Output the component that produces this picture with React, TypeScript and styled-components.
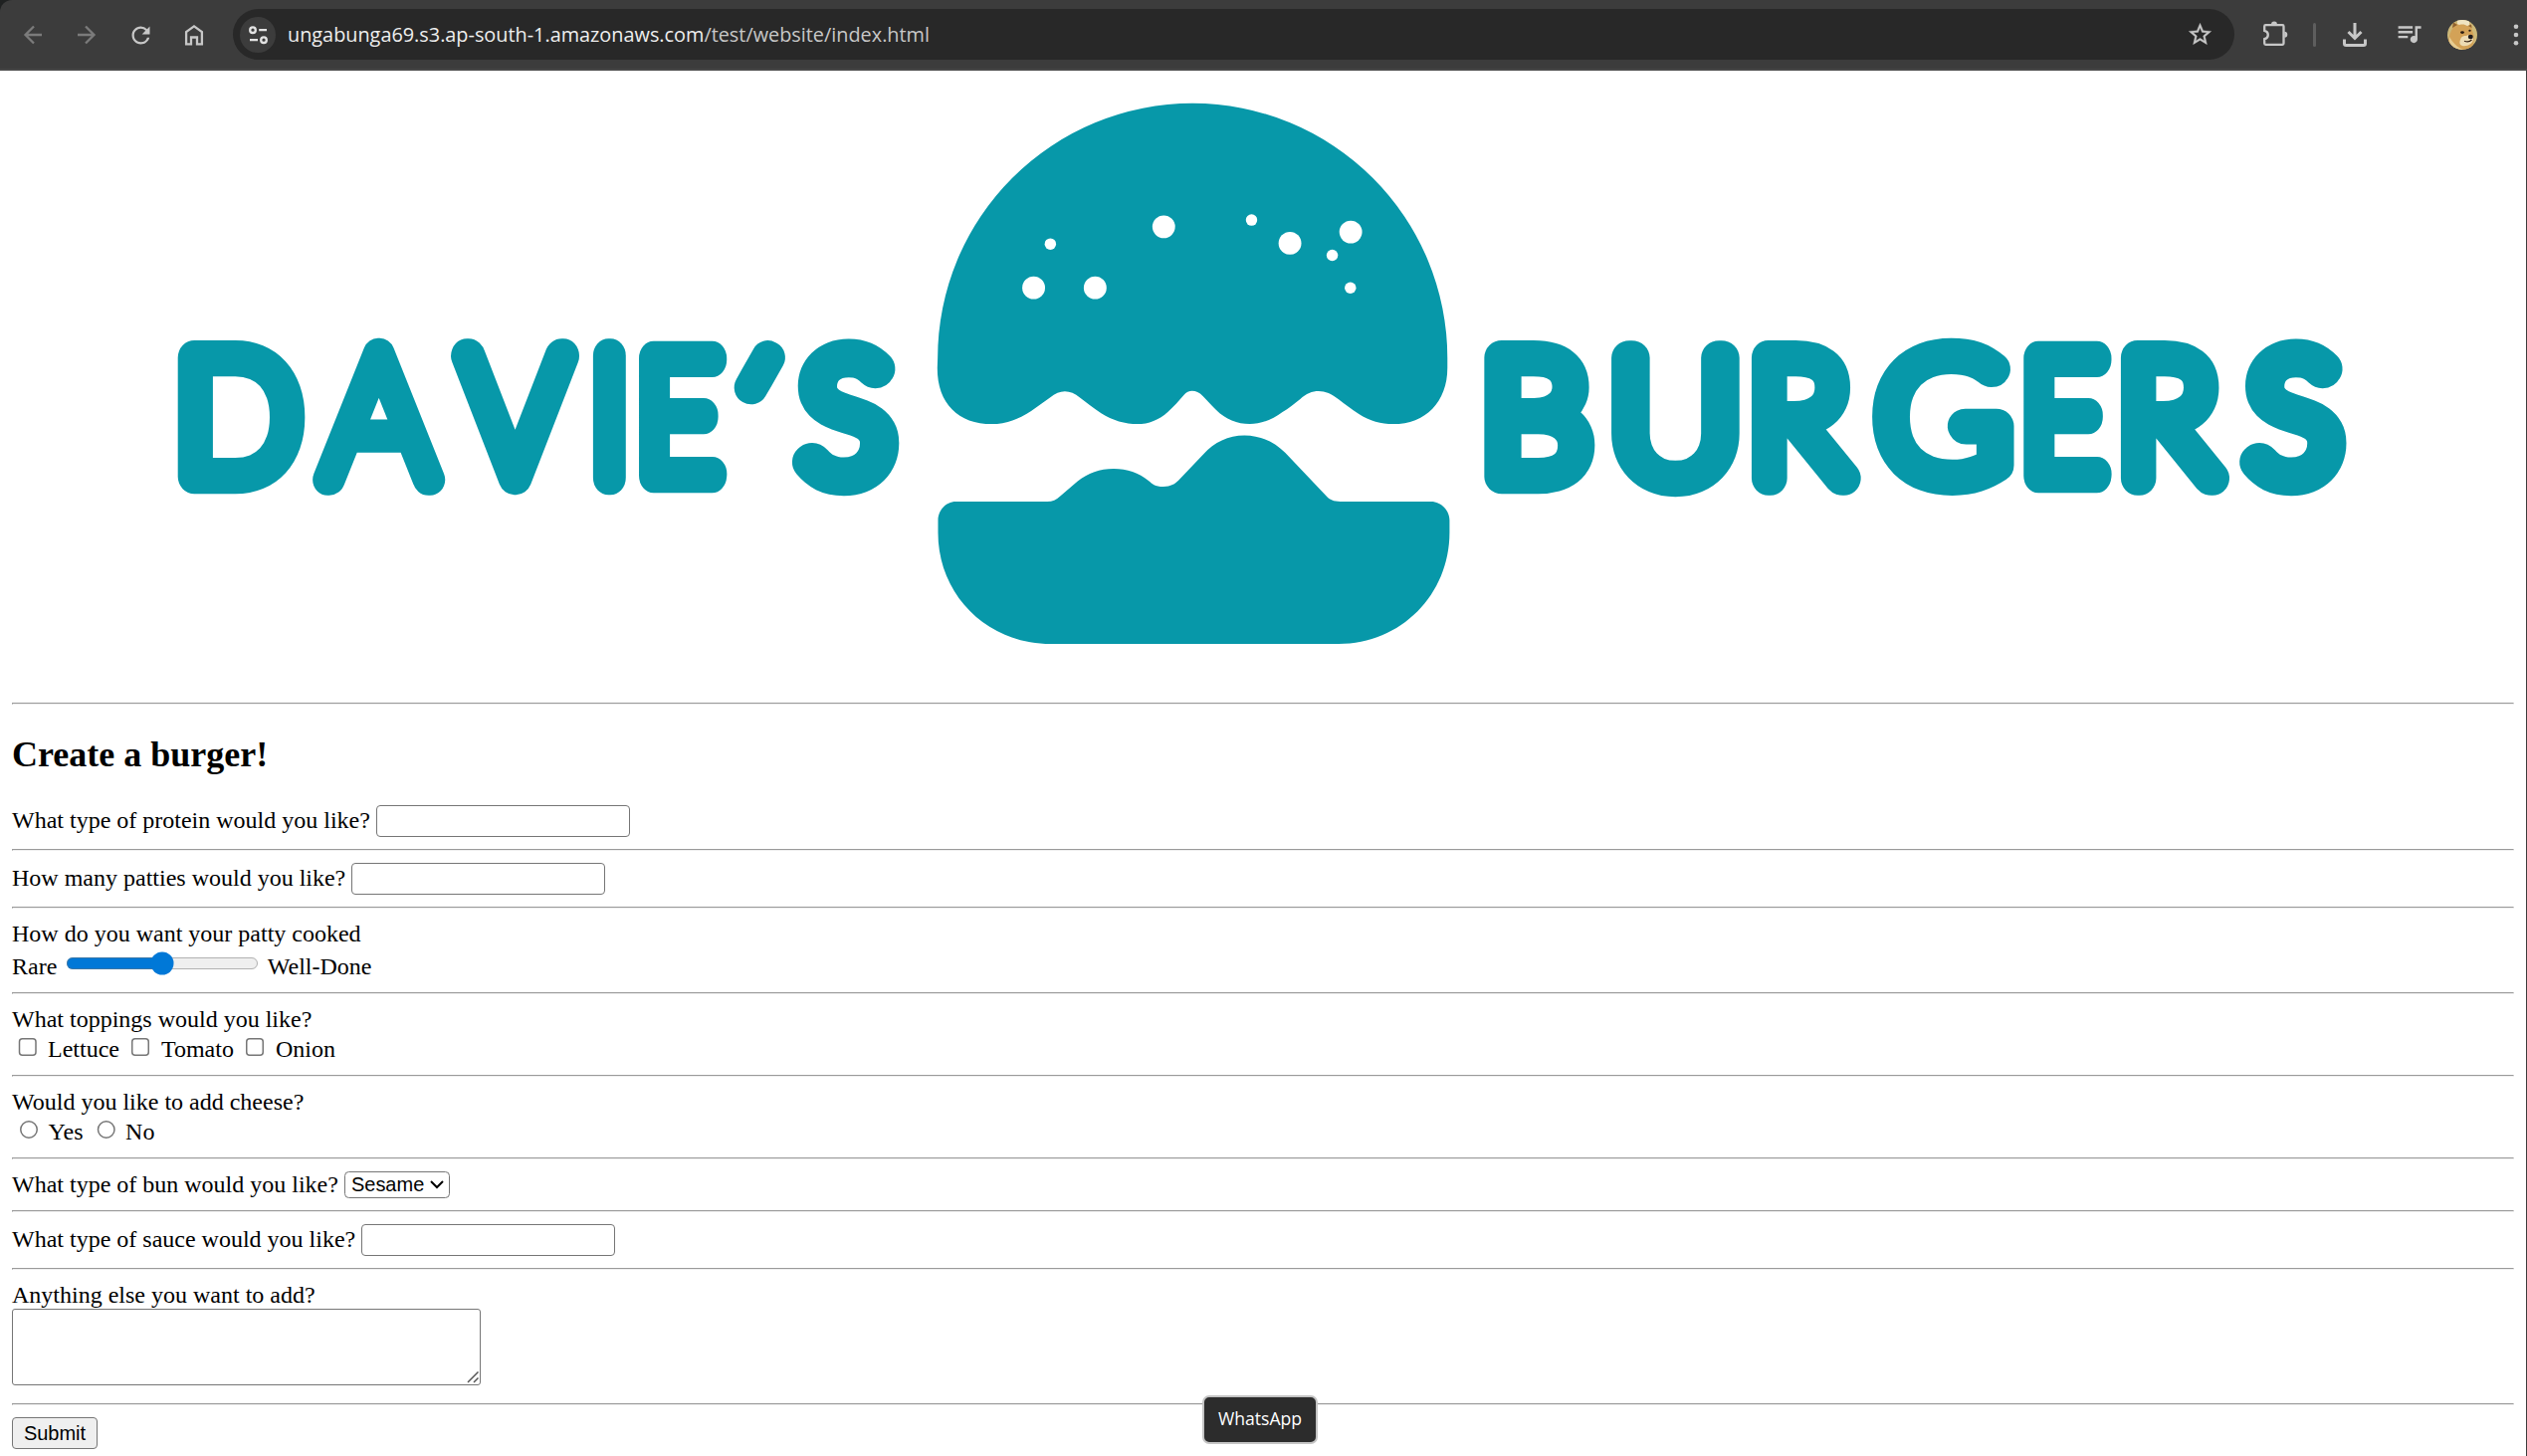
import React, { useMemo } from "react";
import styled, { createGlobalStyle } from "styled-components";
import { MdQueueMusic, MdRefresh, MdStarOutline } from "react-icons/md";

const TEAL = "#0798a9";
const SERIF = '"Liberation Serif", "Times New Roman", serif';
const SANS = '"Liberation Sans", Arial, sans-serif';
const UI = '"Open Sans", "Noto Sans", sans-serif';

const GlobalStyle = createGlobalStyle`
  html, body { margin: 0; padding: 0; background: #fff; overflow: hidden; }
  *, *::before, *::after { box-sizing: border-box; }
`;

/* ---------- browser chrome ---------- */

const Window = styled.div`
  display: flex;
  flex-direction: column;
  width: 100%;
  height: 1463px;
  overflow: hidden;
  background: #1f2121;
`;

const Toolbar = styled.header`
  display: flex;
  align-items: flex-start;
  flex: none;
  height: 71px;
  padding: 9px 0 0 6px;
  overflow: hidden;
  background: #3c3c3c;
  border-bottom: 2px solid #474747;
  border-top-left-radius: 12px;
`;

const ToolButton = styled.button<{ $dim?: boolean }>`
  display: flex;
  align-items: center;
  justify-content: center;
  flex: none;
  width: 54px;
  height: 52px;
  padding: 0;
  border: 0;
  background: none;
  color: ${(p) => (p.$dim ? "#7b7b7b" : "#c7c7c7")};
`;

const Glyph = styled.svg<{ $weight?: number }>`
  display: block;
  width: 30px;
  height: 30px;
  fill: none;
  stroke: currentColor;
  stroke-width: ${(p) => p.$weight ?? 2.3};
`;

const Omnibox = styled.div`
  display: flex;
  align-items: center;
  flex: 1;
  height: 51px;
  margin: 0 14px 0 12px;
  padding: 0 21px 0 7px;
  border-radius: 26px;
  background: #282828;
`;

const SiteChip = styled.span`
  display: flex;
  align-items: center;
  justify-content: center;
  flex: none;
  width: 36px;
  height: 36px;
  margin-right: 12px;
  border-radius: 50%;
  background: #3c3c3c;
  color: #e3e3e3;
`;

const Url = styled.span`
  flex: 1;
  font: 19.85px/28px ${UI};
  color: #c7c7c7;
  white-space: nowrap;
`;

const Domain = styled.span`
  color: #eeeeee;
`;

const StarIcon = styled(MdStarOutline)`
  flex: none;
  width: 27px;
  height: 27px;
  color: #c7c7c7;
  stroke: currentColor;
  stroke-width: 0.3;
`;

const ReloadIcon = styled(MdRefresh)`
  width: 27px;
  height: 27px;
`;

const QueueIcon = styled(MdQueueMusic)`
  width: 29px;
  height: 29px;
  margin-bottom: 3px;
`;

const Divider = styled.span`
  flex: none;
  width: 3px;
  height: 24px;
  margin: 14px 12px 0 11px;
  border-radius: 2px;
  background: #5e5e5e;
`;

const Actions = styled.div`
  display: flex;
  flex: none;
  width: 280px;
  overflow: hidden;
`;

/* ---------- page ---------- */

const Page = styled.main`
  flex: 1;
  padding: 12px 12px 0;
  background: #fff;
  border-right: 1px solid #3c3c3c;
  color: #000;
  font-family: ${SERIF};
  font-size: 24px;
`;

const Logo = styled.svg`
  display: block;
  width: 2514px;
  height: 611px;
  fill: ${TEAL};
`;

const Wordmark = styled.text`
  font-family: Lato, sans-serif;
  font-weight: 100;
  stroke: ${TEAL};
  stroke-linejoin: round;
  stroke-linecap: round;
`;

const Rule = styled.hr`
  height: 2px;
  margin: 12px 0;
  border: 1px solid;
  border-color: #9a9a9a #eeeeee #eeeeee #9a9a9a;
`;

const Heading = styled.h2`
  margin: 30px 0;
  font-size: 36px;
  line-height: 41px;
  font-weight: 700;
`;

const Line = styled.div<{ $h: number }>`
  display: flex;
  align-items: center;
  gap: 6px;
  height: ${(p) => p.$h}px;
  line-height: 27px;
  white-space: nowrap;
`;

const Label = styled.label<{ $drop?: number; $lift?: number }>`
  padding: ${(p) => p.$drop ?? 0}px 0 ${(p) => p.$lift ?? 0}px;
`;

const TextInput = styled.input`
  width: 255px;
  height: 32px;
  padding: 1px 3px;
  border: 1px solid #767676;
  border-radius: 4px;
  background: #fff;
  font: 20px ${SANS};
`;

const Slider = styled.input`
  zoom: 1.5;
  width: 129px;
  height: 16px;
  margin: 0 2px 1px;
  accent-color: #0078d7;
`;

const Check = styled.input`
  zoom: 1.5;
  width: 13px;
  height: 13px;
  margin: 0 3px 1px 4px;
`;

const Radio = styled(Check)`
  margin: 0 2.4px 1px 5px;
`;

const Select = styled.select`
  zoom: 1.5;
  width: 70.6px;
  height: 17.6px;
  padding: 0;
  border: 1px solid #767676;
  border-radius: 3px;
  background-color: #fff;
  color: #000;
  font: 13.333px ${SANS};
`;

const NotesBox = styled.div`
  position: relative;
  width: 471px;
  height: 77px;
  margin-bottom: 18px;
`;

const Notes = styled.textarea`
  display: block;
  width: 100%;
  height: 100%;
  padding: 3px;
  border: 1px solid #767676;
  border-radius: 3px;
  background: #fff;
  font: 20px monospace;
  resize: none;
`;

const Grip = styled.svg`
  position: absolute;
  right: 2px;
  bottom: 2px;
  width: 12px;
  height: 12px;
  stroke: #555;
  stroke-width: 1.5;
`;

const Submit = styled.button`
  display: block;
  width: 86px;
  height: 32px;
  padding: 0;
  border: 1px solid #767676;
  border-radius: 4px;
  background: #efefef;
  color: #000;
  font: 20px/29px ${SANS};
`;

const Tooltip = styled.div`
  position: fixed;
  left: 1208px;
  top: 1402px;
  width: 116px;
  height: 49px;
  border: 2px solid #c4c4c4;
  border-radius: 7px;
  background: #2c2c2c;
  color: #fff;
  font: 17.6px/43px ${UI};
  text-align: center;
`;

/* ---------- logo ---------- */

type Letter = { ch: string; from: number; to: number; top: number; bottom: number; stroke?: number };

const DAVIE: Letter[] = [
  { ch: "D", from: 178, to: 307.9, top: 342.2, bottom: 495.8 },
  { ch: "A", from: 313.7, to: 448.5, top: 339.2, bottom: 497, stroke: 30.5 },
  { ch: "V", from: 452.5, to: 583, top: 341.2, bottom: 497 },
  { ch: "I", from: 595.2, to: 630.2, top: 341, bottom: 497 },
  { ch: "E", from: 641.4, to: 730.6, top: 342.2, bottom: 494.8 },
  { ch: "'", from: 737, to: 789.3, top: 341, bottom: 408 },
  { ch: "S", from: 795, to: 903.4, top: 339.8, bottom: 499.8, stroke: 36 },
];

const BURGERS: Letter[] = [
  { ch: "B", from: 1490.8, to: 1603.8, top: 342.2, bottom: 495.8 },
  { ch: "U", from: 1617.2, to: 1749.4, top: 341, bottom: 499 },
  { ch: "R", from: 1759.2, to: 1870.8, top: 342.2, bottom: 497 },
  { ch: "G", from: 1880.6, to: 2024, top: 339, bottom: 499.2 },
  { ch: "E", from: 2032.8, to: 2122, top: 342.2, bottom: 494.8 },
  { ch: "R", from: 2130.2, to: 2241.1, top: 342.2, bottom: 497 },
  { ch: "S", from: 2249.2, to: 2357.5, top: 339.8, bottom: 499.8, stroke: 36 },
];

const STROKE = 33.5;
const BLEED = 1;

function useGlyphBox() {
  return useMemo(() => {
    const ctx = document.createElement("canvas").getContext("2d")!;
    ctx.font = "100 1000px Lato";
    return (ch: string) => {
      const m = ctx.measureText(ch);
      return {
        left: m.actualBoundingBoxLeft / 1000,
        right: m.actualBoundingBoxRight / 1000,
        up: m.actualBoundingBoxAscent / 1000,
        down: m.actualBoundingBoxDescent / 1000,
        advance: m.width / 1000,
      };
    };
  }, []);
}

function Word({ letters }: { letters: Letter[] }) {
  const boxOf = useGlyphBox();
  return (
    <Wordmark>
      {letters.map(({ ch, from, to, top, bottom, stroke = STROKE }, i) => {
        const m = boxOf(ch);
        if (ch === "'") {
          // the apostrophe leans: turn the straight glyph about its own centre
          const angle = 29.6;
          const a = (angle * Math.PI) / 180;
          const quote = 37 / (m.up + m.down);
          const cx = ((m.right - m.left) / 2) * quote;
          const cy = ((m.up - m.down) / 2) * quote;
          return (
            <tspan
              key={i}
              fontSize={quote}
              strokeWidth={stroke - 1}
              rotate={angle}
              x={(from + to) / 2 - (cx * Math.cos(a) + cy * Math.sin(a))}
              y={(top + bottom) / 2 - (cx * Math.sin(a) - cy * Math.cos(a))}
            >
              {ch}
            </tspan>
          );
        }
        const size = (bottom - top - stroke) / (m.up + m.down);
        const scale = (to - from) / ((m.left + m.right) * size + stroke);
        return (
          <tspan
            key={i}
            fontSize={size}
            strokeWidth={stroke + BLEED}
            x={from + (stroke / 2 + m.left * size) * scale}
            y={bottom - stroke / 2 - m.down * size}
            textLength={m.advance * size * scale}
            lengthAdjust="spacingAndGlyphs"
          >
            {ch}
          </tspan>
        );
      })}
    </Wordmark>
  );
}

const SEEDS: [number, number, number][] = [
  [379, 439, 16], [332, 556, 32], [505, 556, 32], [698, 393, 32], [945, 375, 16],
  [1053, 437, 32], [1224, 407, 32], [1172, 469, 16], [1223, 556, 16],
];

function BurgerLogo() {
  return (
    <Logo viewBox="12 83 2514 611" role="img" aria-label="Davie's Burgers">
      <Word letters={DAVIE} />
      <g transform="translate(920 80) scale(0.35714 0.37622)">
        <path d="M61 770 L62 743 A717 680 0 0 1 1496 743 L1496 770 C1496 860 1435 920 1343 920 C1310 920 1277 912 1247 893 C1225 880 1208 867 1190 854 C1153 825 1115 824 1082 853 C1065 866 1049 878 1032 888 C1005 908 970 920 940 920 C905 920 872 908 845 882 C830 868 820 856 808 845 C790 828 768 827 755 842 C740 858 726 874 710 887 C685 909 655 920 624 920 C590 920 553 910 522 891 C500 877 480 862 462 849 C435 828 407 826 378 849 L325 885 C290 908 250 920 215 920 C120 920 61 865 61 770 Z" />
        <path d="M113 1127 H370 C385 1127 396 1122 406 1113 L455 1073 C485 1050 518 1039 557 1039 C595 1039 628 1050 655 1071 C665 1079 673 1087 697 1087 C718 1087 730 1080 740 1070 L810 1000 C840 968 880 950 925 950 C970 950 1010 968 1040 997 L1155 1112 C1166 1123 1175 1127 1195 1127 H1450 C1478 1127 1502 1150 1502 1177 V1210 C1502 1375 1365 1507 1190 1507 H380 C200 1507 63 1375 63 1210 V1177 C63 1150 85 1127 113 1127 Z" />
        {SEEDS.map(([x, y, r]) => (
          <ellipse key={`${x}-${y}`} cx={x} cy={y} rx={r} ry={r * 0.95} fill="#fff" />
        ))}
      </g>
      <Word letters={BURGERS} />
    </Logo>
  );
}

/* ---------- toolbar parts ---------- */

function DogeAvatar() {
  return (
    <svg width="30" height="30" viewBox="0 0 30 30">
      <defs>
        <clipPath id="face"><circle cx="15" cy="15" r="15" /></clipPath>
      </defs>
      <g clipPath="url(#face)">
        <rect width="30" height="30" fill="#cdb878" />
        <path d="M10 0 H22 V8 H10 Z" fill="#efe4c2" />
        <path d="M1 30 C0 20 3 12 5 9 L6 2.500 L12 5 C16 4 18 5 20 6 L24 4.500 L25 11 C28 17 27 25 23 30 Z" fill="#d3a257" />
        <path d="M5 8 L6 2.500 L10 5 Z M21 6 L24 4.500 L24.500 8 Z" fill="#8f622f" />
        <path d="M13 20 C14 16 17 16 19 16 C22 14 26 15 26 19 C26 24 20 27 15 26 C12 25 12 22 13 20 Z" fill="#eddcb4" />
        <path d="M2 17 C5 22 9 27 16 30 H2 Z" fill="#e6cc92" />
        <ellipse cx="15" cy="12.600" rx="1.900" ry="1.300" fill="#2a1c12" />
        <ellipse cx="22.500" cy="10.800" rx="1.200" ry="1" fill="#2a1c12" />
        <ellipse cx="23.300" cy="17" rx="2.500" ry="2.200" fill="#1d1a1c" />
        <path d="M17 21.200 C20 22.500 23 21.500 24.500 20" fill="none" stroke="#3a2618" strokeWidth="1.200" />
      </g>
    </svg>
  );
}

function BrowserToolbar() {
  return (
    <Toolbar>
      <ToolButton $dim aria-label="Back">
        <Glyph viewBox="0 0 30 30"><path d="M24 15H7.500M16 6.500L7.500 15L16 23.500" /></Glyph>
      </ToolButton>
      <ToolButton $dim aria-label="Forward">
        <Glyph viewBox="0 0 30 30"><path d="M6 15H22.500M14 6.500L22.500 15L14 23.500" /></Glyph>
      </ToolButton>
      <ToolButton aria-label="Reload"><ReloadIcon /></ToolButton>
      <ToolButton aria-label="Home">
        <Glyph viewBox="0 0 30 30">
          <path d="M7.100 24.300V12L15 6.300L22.900 12V24.300H18V17.500H12V24.300Z" />
        </Glyph>
      </ToolButton>
      <Omnibox>
        <SiteChip>
          <Glyph viewBox="0 0 30 30">
            <circle cx="10" cy="10.200" r="2.800" />
            <path d="M16.200 10.200H24M7 20.200H15" />
            <circle cx="21" cy="20.200" r="2.800" />
          </Glyph>
        </SiteChip>
        <Url><Domain>ungabunga69.s3.ap-south-1.amazonaws.com</Domain>/test/website/index.html</Url>
        <StarIcon />
      </Omnibox>
      <Actions>
        <ToolButton aria-label="Extensions">
          <Glyph viewBox="0 0 30 30">
            <path d="M5.400 5.200H22.300Q23.500 5.200 23.500 6.400V23.600Q23.500 24.800 22.300 24.800H5.400Q4.200 24.800 4.200 23.600V19.200C9 18 9 11.800 4.200 10.800V6.400Q4.200 5.200 5.400 5.200Z" />
            <path d="M11 4.500a3 3 0 0 1 6 0ZM24.300 11.700a3 3 0 0 1 0 6Z" fill="currentColor" stroke="none" />
          </Glyph>
        </ToolButton>
        <Divider />
        <ToolButton aria-label="Downloads">
          <Glyph viewBox="0 0 30 30" $weight={3}>
            <path d="M15 3V18.500M8.500 12L15 18.500L21.500 12M4.500 19.500V23.700Q4.500 25.400 6.200 25.400H23.800Q25.500 25.400 25.500 23.700V19.500" />
          </Glyph>
        </ToolButton>
        <ToolButton aria-label="Media controls"><QueueIcon /></ToolButton>
        <ToolButton aria-label="Profile"><DogeAvatar /></ToolButton>
        <ToolButton aria-label="Menu">
          <Glyph viewBox="0 0 30 30">
            <g fill="currentColor" stroke="none">
              <circle cx="15" cy="6.800" r="2.300" />
              <circle cx="15" cy="15" r="2.300" />
              <circle cx="15" cy="23.200" r="2.300" />
            </g>
          </Glyph>
        </ToolButton>
      </Actions>
    </Toolbar>
  );
}

export default function App() {
  return (
    <Window>
      <GlobalStyle />
      <BrowserToolbar />
      <Page>
        <BurgerLogo />
        <Rule />
        <Heading>Create a burger!</Heading>
        <Line $h={32}>
          <Label htmlFor="protein" $lift={2}>What type of protein would you like?</Label>
          <TextInput id="protein" type="text" />
        </Line>
        <Rule />
        <Line $h={32}>
          <Label htmlFor="patties" $lift={2}>How many patties would you like?</Label>
          <TextInput id="patties" type="text" />
        </Line>
        <Rule />
        <Line $h={27}>How do you want your patty cooked</Line>
        <Line $h={33}>
          <Label $drop={5}>Rare</Label>
          <Slider type="range" defaultValue={50} />
          <Label $drop={5}>Well-Done</Label>
        </Line>
        <Rule />
        <Line $h={27}>What toppings would you like?</Line>
        <Line $h={30}>
          <Check type="checkbox" id="lettuce" />
          <Label htmlFor="lettuce" $drop={2}>Lettuce</Label>
          <Check type="checkbox" id="tomato" />
          <Label htmlFor="tomato" $drop={2}>Tomato</Label>
          <Check type="checkbox" id="onion" />
          <Label htmlFor="onion" $drop={2}>Onion</Label>
        </Line>
        <Rule />
        <Line $h={27}>Would you like to add cheese?</Line>
        <Line $h={30}>
          <Radio type="radio" name="cheese" id="yes" />
          <Label htmlFor="yes" $drop={2}>Yes</Label>
          <Radio type="radio" name="cheese" id="no" />
          <Label htmlFor="no" $drop={2}>No</Label>
        </Line>
        <Rule />
        <Line $h={27}>
          <Label htmlFor="bun">What type of bun would you like?</Label>
          <Select id="bun"><option>Sesame</option></Select>
        </Line>
        <Rule />
        <Line $h={32}>
          <Label htmlFor="sauce" $lift={2}>What type of sauce would you like?</Label>
          <TextInput id="sauce" type="text" />
        </Line>
        <Rule />
        <Line $h={27}>Anything else you want to add?</Line>
        <NotesBox>
          <Notes />
          <Grip viewBox="0 0 12 12"><path d="M1 11L11.500 0.500M7 11L11.500 6.500" /></Grip>
        </NotesBox>
        <Rule />
        <Submit type="button">Submit</Submit>
      </Page>
      <Tooltip>WhatsApp</Tooltip>
    </Window>
  );
}
